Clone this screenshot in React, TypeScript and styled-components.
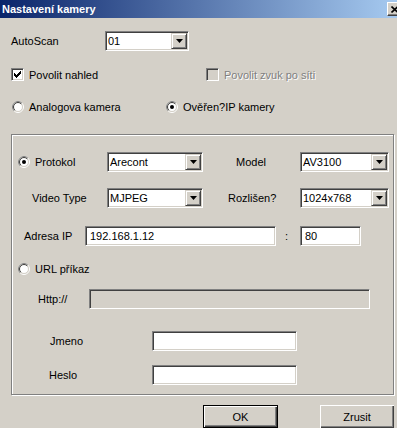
import React from 'react';
import styled, { createGlobalStyle } from 'styled-components';

const GlobalStyle = createGlobalStyle`
  html, body {
    margin: 0;
    padding: 0;
    background: #d4d0c8;
  }
  body {
    font-family: "Liberation Sans", Arial, sans-serif;
    font-size: 11px;
    color: #000;
  }
`;

const Window = styled.div`
  width: 397px;
  height: 428px;
  overflow: hidden;
  background: #d4d0c8;
  display: flex;
  flex-direction: column;
`;

const TitleBar = styled.div`
  height: 18px;
  flex: none;
  display: flex;
  align-items: center;
  justify-content: space-between;
  padding-left: 2px;
  background: linear-gradient(to right, #0a246a, #a6caf0);
  color: #fff;
  font-weight: bold;
  font-size: 11px;
`;

const CloseButton = styled.div`
  width: 16px;
  height: 14px;
  flex: none;
  margin-right: -6px;
  box-sizing: border-box;
  background: #d4d0c8;
  border: 1px solid;
  border-color: #fff #404040 #404040 #fff;
  box-shadow: inset -1px -1px #808080;
  display: flex;
  align-items: center;
  justify-content: center;
`;

const Row = styled.div<{ $mt: number; $h: number; $pl?: number }>`
  display: flex;
  align-items: center;
  flex: none;
  margin-top: ${p => p.$mt}px;
  height: ${p => p.$h}px;
  padding-left: ${p => p.$pl ?? 0}px;
`;

const Cell = styled.div<{ $w: number; $pl?: number; $disabled?: boolean }>`
  width: ${p => p.$w}px;
  padding-left: ${p => p.$pl ?? 0}px;
  box-sizing: border-box;
  flex: none;
  display: flex;
  align-items: center;
  gap: 5px;
  white-space: nowrap;
  color: ${p => (p.$disabled ? '#808080' : '#000')};
  text-shadow: ${p => (p.$disabled ? '1px 1px #fff' : 'none')};
`;

const Sunken = styled.div<{ $w: number; $disabled?: boolean }>`
  width: ${p => p.$w}px;
  height: 20px;
  flex: none;
  box-sizing: border-box;
  background: ${p => (p.$disabled ? '#d4d0c8' : '#fff')};
  border: 1px solid;
  border-color: #808080 #fff #fff #808080;
  box-shadow: inset 1px 1px #404040, inset -1px -1px #d4d0c8;
  display: flex;
  align-items: center;
  padding: 1px;
`;

const FieldText = styled.span<{ $pl: number }>`
  flex: 1;
  padding-left: ${p => p.$pl}px;
  white-space: nowrap;
  overflow: hidden;
`;

const ArrowButton = styled.div`
  width: 16px;
  height: 16px;
  flex: none;
  box-sizing: border-box;
  background: #d4d0c8;
  border: 1px solid;
  border-color: #d4d0c8 #404040 #404040 #d4d0c8;
  box-shadow: inset 1px 1px #fff, inset -1px -1px #808080;
  display: flex;
  align-items: center;
  justify-content: center;
`;

const CheckBox = styled.div<{ $disabled?: boolean }>`
  width: 13px;
  height: 13px;
  flex: none;
  box-sizing: border-box;
  background: ${p => (p.$disabled ? '#d4d0c8' : '#fff')};
  border: 1px solid;
  border-color: #808080 #fff #fff #808080;
  box-shadow: inset 1px 1px #404040, inset -1px -1px #d4d0c8;
  position: relative;
`;

const CheckMark = styled.svg`
  position: absolute;
  left: 2px;
  top: 2px;
`;

const RadioIcon = styled.svg`
  flex: none;
  margin-left: 1px;
`;

const Group = styled.div`
  margin-top: 21px;
  margin-left: 11px;
  width: 383px;
  height: 261px;
  flex: none;
  box-sizing: border-box;
  border: 1px solid #808080;
  box-shadow: inset 1px 1px #fff, 1px 1px #fff;
  display: flex;
  flex-direction: column;
  align-items: flex-start;
  padding-left: 5px;
`;

const ButtonBar = styled.div`
  display: flex;
  flex: none;
  margin-top: 10px;
  padding-left: 203px;
  gap: 42px;
`;

const PushButton = styled.div<{ $w: number; $default?: boolean }>`
  width: ${p => p.$w}px;
  height: 23px;
  box-sizing: border-box;
  background: #d4d0c8;
  display: flex;
  align-items: center;
  justify-content: center;
  border: ${p => (p.$default ? '1px solid #000' : 'none')};
  box-shadow: inset 1px 1px #fff, inset -1px -1px #404040, inset -2px -2px #808080;
`;

const Combo = ({ w, value }: { w: number; value: string }) => (
  <Sunken $w={w}>
    <FieldText $pl={1}>{value}</FieldText>
    <ArrowButton>
      <svg width="7" height="4" viewBox="0 0 7 4">
        <polygon points="0,0 7,0 3.5,4" fill="#000" />
      </svg>
    </ArrowButton>
  </Sunken>
);

const Input = ({ w, value, disabled }: { w: number; value?: string; disabled?: boolean }) => (
  <Sunken $w={w} $disabled={disabled}>
    <FieldText $pl={3}>{value}</FieldText>
  </Sunken>
);

const checkPixels = [
  [6], [5, 6], [0, 4, 5, 6], [0, 1, 3, 4, 5], [0, 1, 2, 3, 4], [1, 2, 3], [2],
];

const Check = ({ checked, disabled }: { checked?: boolean; disabled?: boolean }) => (
  <CheckBox $disabled={disabled}>
    {checked && (
      <CheckMark width="7" height="7" viewBox="0 0 7 7" shapeRendering="crispEdges">
        {checkPixels.map((cols, y) =>
          cols.map(x => <rect key={`${x}-${y}`} x={x} y={y} width="1" height="1" fill="#000" />)
        )}
      </CheckMark>
    )}
  </CheckBox>
);

const Radio = ({ checked }: { checked?: boolean }) => (
  <RadioIcon width="12" height="12" viewBox="0 0 12 12">
    <circle cx="6" cy="6" r="5.5" fill="none" stroke="#fff" />
    <path d="M2.1 9.9 A5.5 5.5 0 0 1 9.9 2.1" fill="none" stroke="#808080" />
    <circle cx="6" cy="6" r="4.5" fill="#fff" stroke="#d4d0c8" />
    <path d="M2.8 9.2 A4.5 4.5 0 0 1 9.2 2.8" fill="none" stroke="#404040" />
    {checked && <circle cx="6" cy="6" r="2" fill="#000" />}
  </RadioIcon>
);

export default function App() {
  return (
    <>
      <GlobalStyle />
      <Window>
        <TitleBar>
          <span>Nastavení kamery</span>
          <CloseButton>
            <svg width="8" height="7" viewBox="0 0 8 7">
              <path d="M0.5 0.5 L7 6.5 M7 0.5 L0.5 6.5" stroke="#000" strokeWidth="1.6" />
            </svg>
          </CloseButton>
        </TitleBar>

        <Row $mt={13} $h={20} $pl={11}>
          <Cell $w={94}>AutoScan</Cell>
          <Combo w={84} value="01" />
        </Row>

        <Row $mt={17} $h={13} $pl={11}>
          <Cell $w={195}>
            <Check checked />
            Povolit nahled
          </Cell>
          <Cell $w={170} $disabled>
            <Check disabled />
            Povolit zvuk po síti
          </Cell>
        </Row>

        <Row $mt={20} $h={12} $pl={11}>
          <Cell $w={154}>
            <Radio />
            Analogova kamera
          </Cell>
          <Cell $w={150}>
            <Radio checked />
            Ověřen?IP kamery
          </Cell>
        </Row>

        <Group>
          <Row $mt={17} $h={20}>
            <Cell $w={90}>
              <Radio checked />
              Protokol
            </Cell>
            <Combo w={96} value="Arecont" />
            <Cell $w={97} $pl={33}>Model</Cell>
            <Combo w={89} value="AV3100" />
          </Row>

          <Row $mt={16} $h={20}>
            <Cell $w={90} $pl={15}>Video Type</Cell>
            <Combo w={96} value="MJPEG" />
            <Cell $w={97} $pl={25}>Rozlišen?</Cell>
            <Combo w={89} value="1024x768" />
          </Row>

          <Row $mt={18} $h={20}>
            <Cell $w={68} $pl={7}>Adresa IP</Cell>
            <Input w={191} value="192.168.1.12" />
            <Cell $w={24} $pl={9}>:</Cell>
            <Input w={61} value="80" />
          </Row>

          <Row $mt={17} $h={12}>
            <Cell $w={120}>
              <Radio />
              URL příkaz
            </Cell>
          </Row>

          <Row $mt={14} $h={20}>
            <Cell $w={72} $pl={21}>Http://</Cell>
            <Input w={281} disabled />
          </Row>

          <Row $mt={22} $h={20}>
            <Cell $w={135} $pl={33}>Jmeno</Cell>
            <Input w={145} />
          </Row>

          <Row $mt={14} $h={20}>
            <Cell $w={135} $pl={32}>Heslo</Cell>
            <Input w={145} />
          </Row>
        </Group>

        <ButtonBar>
          <PushButton $w={75} $default>OK</PushButton>
          <PushButton $w={74}>Zrusit</PushButton>
        </ButtonBar>
      </Window>
    </>
  );
}
